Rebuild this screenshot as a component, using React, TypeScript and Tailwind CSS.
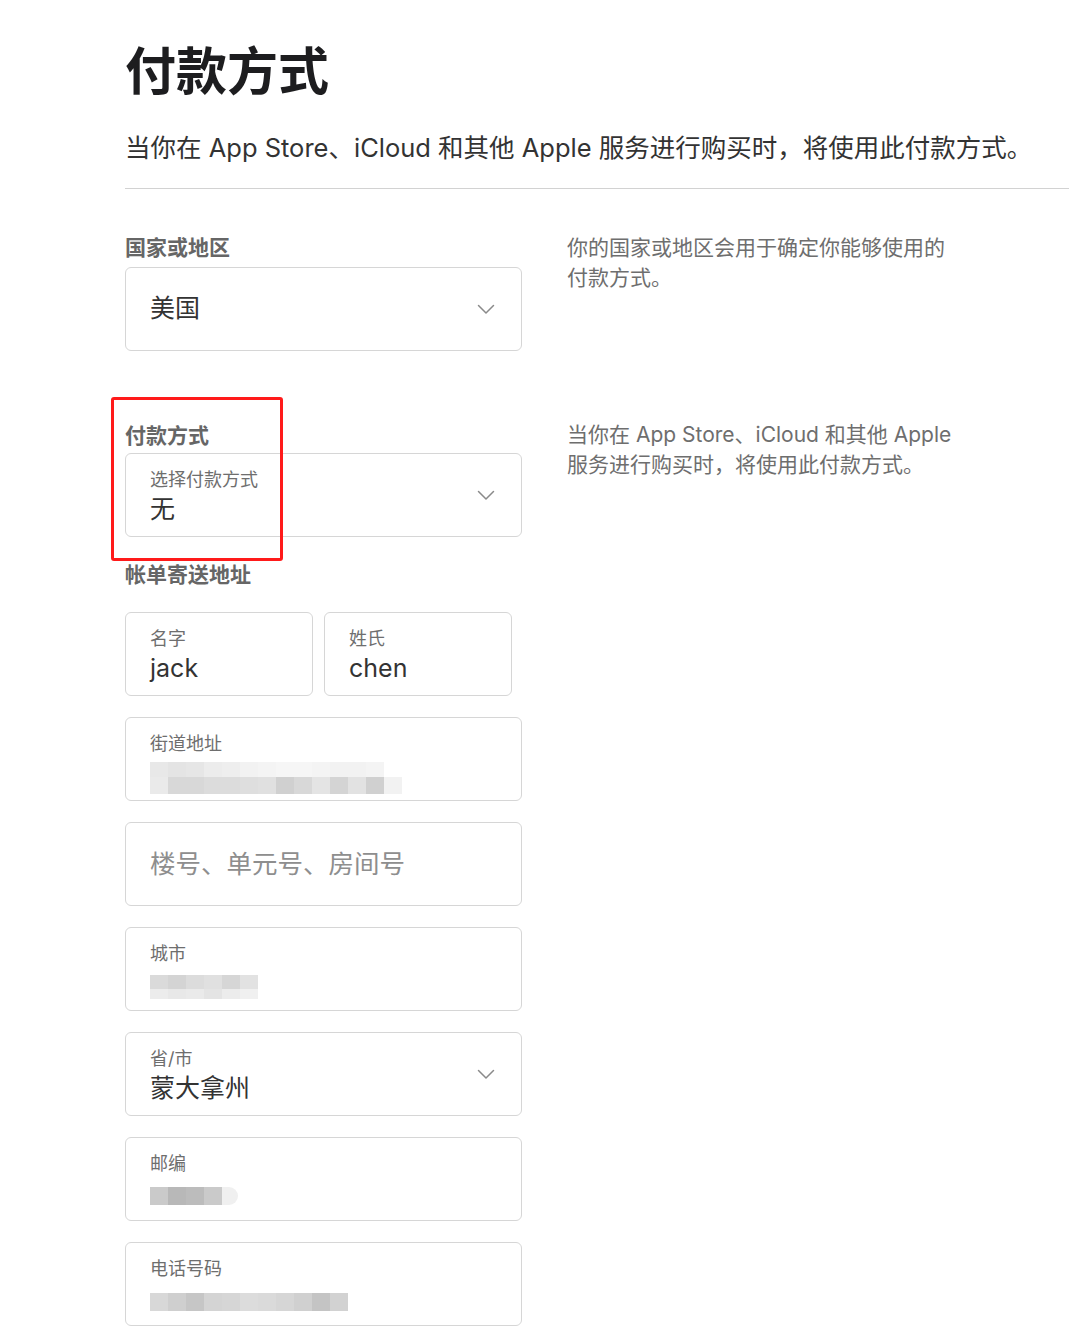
import React from "react";

const FONT = { fontFamily: 'Inter, "Noto Sans CJK SC", "Noto Sans", sans-serif' };

function Chevron() {
  return (
    <svg width="18" height="11" viewBox="0 0 18 11" className="shrink-0">
      <path d="M1.5 1.5 L9 9 L16.5 1.5" fill="none" stroke="#8a8a8a" strokeWidth="1.5" strokeLinecap="round" strokeLinejoin="round" />
    </svg>
  );
}

function Pixels({ rows, cell = 18 }: { rows: { h: number; colors: string[] }[]; cell?: number }) {
  return (
    <div className="flex flex-col">
      {rows.map((r, i) => (
        <div key={i} className="flex">
          {r.colors.map((c, j) => (
            <div key={j} style={{ width: cell, height: r.h, background: c }} />
          ))}
        </div>
      ))}
    </div>
  );
}

function Field({
  label,
  value,
  children,
  chevron,
  className = "",
}: {
  label: string;
  value?: string;
  children?: React.ReactNode;
  chevron?: boolean;
  className?: string;
}) {
  return (
    <div className={`h-[84px] border border-[#d6d6d6] rounded-[6px] bg-white flex items-center pl-[24px] pr-[26px] ${className}`}>
      <div className="flex-1 flex flex-col pt-[3px]">
        <div className="text-[18px] leading-[24px] text-[#6e6e6e]">{label}</div>
        {value !== undefined ? (
          <div className="text-[25px] leading-[34px] text-[#333]">{value}</div>
        ) : (
          <div className="h-[34px] flex items-center">{children}</div>
        )}
      </div>
      {chevron && <Chevron />}
    </div>
  );
}

export default function App() {
  return (
    <div className="min-h-[1340px] bg-white" style={FONT}>
      <div className="pl-[125px] pt-[40px]">
        <h1 className="text-[51px] leading-[64px] font-bold text-[#1d1d1f]">付款方式</h1>
        <p className="mt-[26px] text-[25.5px] leading-[36px] text-[#333]">
          当你在 App Store、iCloud 和其他 Apple 服务进行购买时，将使用此付款方式。
        </p>
        <div className="mt-[22px] h-px bg-[#d2d2d2]" />

        <div className="flex gap-[45px] mt-[45px]">
          <div className="w-[397px] shrink-0">
            <div className="text-[21px] leading-[28px] font-bold text-[#666]">国家或地区</div>
            <div className="mt-[5px] h-[84px] border border-[#d6d6d6] rounded-[6px] flex items-center pl-[24px] pr-[26px]">
              <div className="flex-1 text-[25px] text-[#333]">美国</div>
              <Chevron />
            </div>

            <div className="relative mt-[71px]">
              <div className="absolute left-[-14px] top-[-25px] w-[172px] h-[164px] border-[3px] border-[#ff1a1a] rounded-[3px] pointer-events-none z-10" />
              <div className="text-[21px] leading-[28px] font-bold text-[#666]">付款方式</div>
              <div className="mt-[3px]">
                <Field label="选择付款方式" value="无" chevron />
              </div>
            </div>

            <div className="mt-[24px] text-[21px] leading-[28px] font-bold text-[#666]">帐单寄送地址</div>
            <div className="mt-[23px] flex flex-col gap-[21px]">
              <div className="flex gap-[11px]">
                <Field label="名字" value="jack" className="w-[188px]" />
                <Field label="姓氏" value="chen" className="w-[188px]" />
              </div>
              <Field label="街道地址">
                <div className="mt-[10px]">
                  <Pixels
                    rows={[
                      { h: 15, colors: ["#e8e8e8", "#e4e4e4", "#e6e6e6", "#ececec", "#eeeeee", "#f2f2f2", "#f4f4f4", "#f6f6f6", "#f6f6f6", "#f4f4f4", "#f2f2f2", "#f2f2f2", "#f4f4f4"] },
                      { h: 17, colors: ["#eaeaea", "#d8d8d8", "#d8d8d8", "#dcdcdc", "#dcdcdc", "#dedede", "#e0e0e0", "#d0d0d0", "#d8d8d8", "#e4e4e4", "#d4d4d4", "#e2e2e2", "#d0d0d0", "#f2f2f2"] },
                    ]}
                  />
                </div>
              </Field>
              <div className="h-[84px] border border-[#d6d6d6] rounded-[6px] flex items-center pl-[24px]">
                <div className="text-[25.5px] text-[#8e8e8e]">楼号、单元号、房间号</div>
              </div>
              <Field label="城市">
                <div className="mt-[8px]">
                  <Pixels
                    rows={[
                      { h: 14, colors: ["#dadada", "#d4d4d4", "#dcdcdc", "#e0e0e0", "#d6d6d6", "#e2e2e2"] },
                      { h: 10, colors: ["#ececec", "#e8e8e8", "#eaeaea", "#e4e4e4", "#ececec", "#f0f0f0"] },
                    ]}
                  />
                </div>
              </Field>
              <Field label="省/市" value="蒙大拿州" chevron />
              <Field label="邮编">
                <div className="mt-[6px] flex items-center">
                  <Pixels rows={[{ h: 18, colors: ["#cacaca", "#b8b8b8", "#bcbcbc", "#cacaca"] }]} />
                  <div className="w-[16px] h-[18px] bg-[#f0f0f0] rounded-r-full" />
                </div>
              </Field>
              <Field label="电话号码">
                <div className="mt-[8px] flex items-center">
                  <Pixels
                    rows={[{ h: 18, colors: ["#d8d8d8", "#cfcfcf", "#c6c6c6", "#d4d4d4", "#d6d6d6", "#dcdcdc", "#dadada", "#d6d6d6", "#d0d0d0", "#c4c4c4", "#d2d2d2"] }]}
                  />
                </div>
              </Field>
            </div>
            <div className="h-[14px]" />
          </div>

          <div className="w-[390px] text-[21px] leading-[30px] text-[#6e6e6e]">
            <p className="mt-[-1px]">你的国家或地区会用于确定你能够使用的付款方式。</p>
            <p className="mt-[127px]">当你在 App Store、iCloud 和其他 Apple 服务进行购买时，将使用此付款方式。</p>
          </div>
        </div>
      </div>
    </div>
  );
}
